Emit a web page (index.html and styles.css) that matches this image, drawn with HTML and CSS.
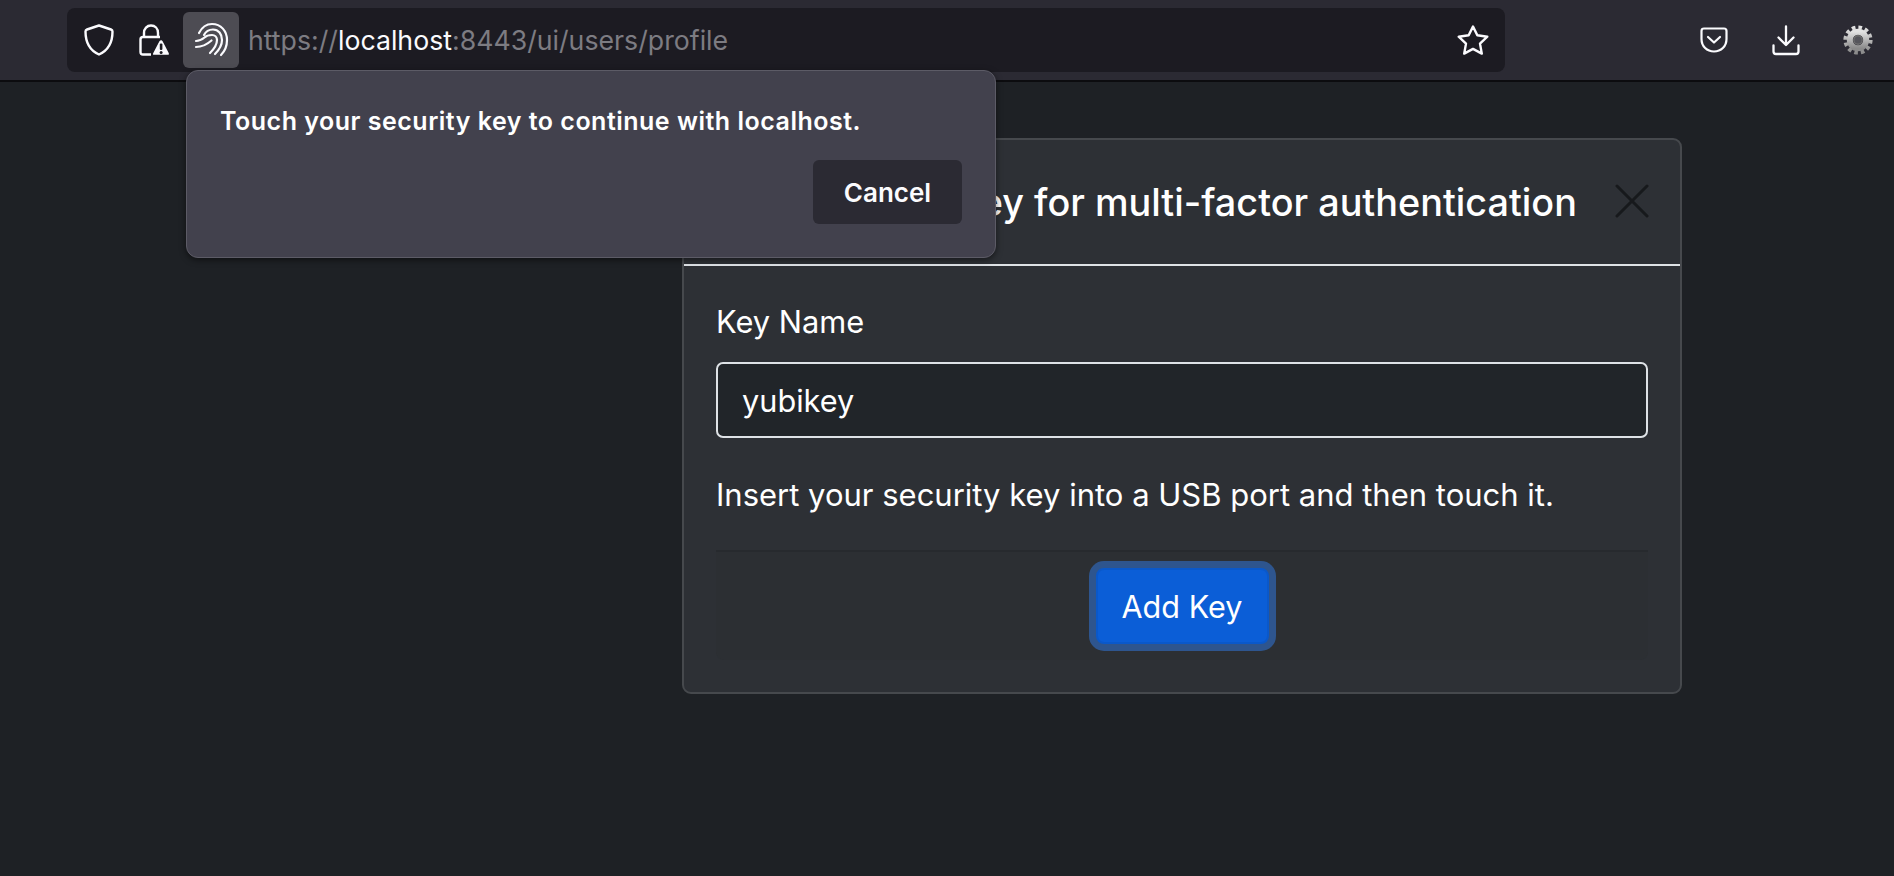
FILE: index.html
```html
<!DOCTYPE html>
<html lang="en">
<head>
    <meta charset="UTF-8">
    <title>Add security key</title>
    <link rel="stylesheet" href="styles.css">
</head>
<body>

<div class="toolbar">
    <div class="urlbar">
        <svg class="icon-shield" width="30" height="32" viewBox="0 0 30 32" fill="none" stroke="#fbfbfe" stroke-width="2.4" stroke-linejoin="round">
            <path d="M15 1.5 L27 5.5 Q28.5 6 28.5 7.5 C28.5 19 24 26.5 15 30.5 C6 26.5 1.5 19 1.5 7.5 Q1.5 6 3 5.5 Z"/>
        </svg>
        <svg class="icon-lock" width="31" height="32" viewBox="0 0 31 32" fill="none">
            <path d="M5 13 V9 C5 4.5 8 1.5 12 1.5 C16 1.5 19 4.5 19 9 V13" stroke="#fbfbfe" stroke-width="2.4"/>
            <path d="M12 30.5 H4 Q1.5 30.5 1.5 28 V15.5 Q1.5 13 4 13 H21" stroke="#fbfbfe" stroke-width="2.4"/>
            <path d="M22 15.5 Q23 15 24 16.5 L30.5 29 Q31 31.5 29 31.5 H15 Q12.5 31.5 13.5 29 L20 16.5 Q20.8 15.5 22 15.5 Z" fill="#fbfbfe" stroke="#1c1b22" stroke-width="1.5"/>
            <rect x="20.8" y="19.5" width="2.6" height="6.5" rx="1" fill="#1c1b22"/>
            <circle cx="22.1" cy="28.4" r="1.5" fill="#1c1b22"/>
        </svg>
        <div class="auth-btn">
            <svg width="44" height="44" viewBox="0 0 44 44" fill="none" stroke="#fbfbfe" stroke-width="2.2" stroke-linecap="round">
                <path d="M10 15 C13 9 18 6 23 6 C32 6 38 13 38 22 C38 28 36 33 32 37"/>
                <path d="M15 17 C17 13 20 11.5 24 11.5 C29.5 11.5 33 16 33 22 C33 27 30 32 26 36"/>
                <path d="M7 23 C10 23 13 21.5 15.5 19.5 C18 17 20.5 17 23 17 C26 17 28 19.5 28 22 C28 26 25 31 21 35"/>
                <path d="M7 29 C12 29 18 26.5 22.5 22.5"/>
            </svg>
        </div>
        <div class="url"><span class="url-dim">https://</span>localhost<span class="url-dim">:8443/ui/users/profile</span></div>
        <svg class="icon-star" width="32" height="31" viewBox="0 0 32 31" fill="none" stroke="#fbfbfe" stroke-width="2.4" stroke-linejoin="round">
            <path d="M16 1.5 L20.3 10.3 L30.3 11.7 L23 18.6 L24.8 28.6 L16 23.9 L7.2 28.6 L9 18.6 L1.7 11.7 L11.7 10.3 Z"/>
        </svg>
    </div>
    <div class="tools">
        <svg width="28" height="26" viewBox="0 0 28 26" fill="none" stroke="#fbfbfe" stroke-width="2.2" stroke-linecap="round" stroke-linejoin="round">
            <path d="M4 1.5 H24 Q26.5 1.5 26.5 4 V12 C26.5 19.5 21 24.5 14 24.5 C7 24.5 1.5 19.5 1.5 12 V4 Q1.5 1.5 4 1.5 Z"/>
            <path d="M8 10 L14 15.5 L20 10"/>
        </svg>
        <svg width="28" height="31" viewBox="0 0 28 31" fill="none" stroke="#fbfbfe" stroke-width="2.3" stroke-linecap="round" stroke-linejoin="round">
            <path d="M14 1.5 V20 M6.5 12.5 L14 20 L21.5 12.5"/>
            <path d="M1.5 20.5 V26.5 Q1.5 29 4 29 H24 Q26.5 29 26.5 26.5 V20.5"/>
        </svg>
        <svg class="icon-gear" width="30" height="30" viewBox="0 0 30 30" fill="none">
            <defs>
                <linearGradient id="gearFill" x1="0" y1="0" x2="0" y2="1">
                    <stop offset="0" stop-color="#e2e2e2"/>
                    <stop offset="1" stop-color="#8a8a8a"/>
                </linearGradient>
            </defs>
            <circle cx="15" cy="15" r="12.6" stroke="url(#gearFill)" stroke-width="4" stroke-dasharray="3.6 3"/>
            <circle cx="15" cy="15" r="8.2" stroke="url(#gearFill)" stroke-width="6"/>
            <circle cx="15" cy="15" r="4.2" fill="#55555b" stroke="#6f6f6f" stroke-width="1.4"/>
        </svg>
    </div>
</div>

<div class="popup">
    <p class="popup-text">Touch your security key to continue with localhost.</p>
    <div class="popup-actions">
        <button class="popup-cancel">Cancel</button>
    </div>
</div>

<div class="page">
    <div class="modal">
        <div class="modal-header">
            <h2 class="modal-title">Add security key for multi-factor authentication</h2>
            <svg class="modal-close" width="34" height="34" viewBox="0 0 34 34" fill="none" stroke="#17191c" stroke-width="3" stroke-linecap="round">
                <path d="M2 2 L32 32 M32 2 L2 32"/>
            </svg>
        </div>
        <div class="modal-body">
            <label class="field-label" for="keyName">Key Name</label>
            <input class="field-input" id="keyName" type="text" value="yubikey">
            <p class="help-text">Insert your security key into a USB port and then touch it.</p>
            <div class="modal-footer">
                <button class="btn-primary">Add Key</button>
            </div>
        </div>
    </div>
</div>

</body>
</html>
```

FILE: styles.css
```css
* {
    box-sizing: border-box;
}
html, body {
    height: 100%;
}
body {
    margin: 0;
    background-color: #1e2125;
    color: #fff;
    font-family: Inter, "Liberation Sans", sans-serif;
    overflow: hidden;
}
.toolbar {
    height: 82px;
    background-color: #2b2a33;
    border-bottom: 2px solid #0c0c0f;
    display: flex;
    padding: 8px 21px 0 67px;
    justify-content: space-between;
}
.urlbar {
    width: 1438px;
    height: 64px;
    background-color: #1c1b22;
    border-radius: 8px;
    display: flex;
    align-items: center;
    padding-left: 17px;
}
.icon-lock {
    margin-left: 25px;
}
.auth-btn {
    width: 56px;
    height: 56px;
    margin-left: 13px;
    background-color: #4d4c53;
    border-radius: 6px;
    display: flex;
    align-items: center;
    justify-content: center;
}
.url {
    flex: 1;
    margin-left: 9px;
    font-size: 26.7px;
    color: #fbfbfe;
    white-space: nowrap;
}
.url-dim {
    color: #7d7c82;
}
.icon-star {
    margin-right: 16px;
}
.tools {
    display: flex;
    align-items: center;
    gap: 44px;
    height: 64px;
}
.icon-gear {
    margin-left: -1px;
}
.popup {
    position: absolute;
    left: 186px;
    top: 70px;
    width: 810px;
    height: 188px;
    background-color: #42414d;
    border: 1px solid #5c5b66;
    border-radius: 12px;
    padding: 0 33px;
    box-shadow: 0 2px 6px rgba(0, 0, 0, 0.5);
}
.popup-text {
    margin: 35px 0 0;
    font-size: 25px;
    line-height: 30px;
    font-weight: 600;
    letter-spacing: 0.5px;
}
.popup-actions {
    display: flex;
    justify-content: flex-end;
    margin-top: 24px;
}
.popup-cancel {
    width: 149px;
    height: 64px;
    background-color: #2b2a33;
    border: none;
    border-radius: 6px;
    color: #fbfbfe;
    font-family: inherit;
    font-size: 26px;
    font-weight: 600;
}
.page {
    padding: 56px 0 0 682px;
}
.modal {
    width: 1000px;
    height: 556px;
    background-color: #2d3035;
    border: 2px solid #46494d;
    border-radius: 9px;
}
.modal-header {
    height: 126px;
    border-bottom: 2px solid #dee2e6;
    display: flex;
    align-items: center;
    justify-content: space-between;
    padding: 0 31px 0 36px;
}
.modal-title {
    margin: 0;
    font-size: 37.8px;
    font-weight: 500;
    white-space: nowrap;
}
.modal-close {
    margin-top: -2px;
}
.modal-body {
    padding: 34px 32px 0 32px;
}
.field-label {
    display: block;
    font-size: 30.8px;
    line-height: 44px;
}
.field-input {
    display: block;
    width: 100%;
    height: 76px;
    margin-top: 18px;
    padding: 0 24px;
    background-color: #212529;
    border: 2px solid #dee2e6;
    border-radius: 7px;
    color: #fff;
    font-family: inherit;
    font-size: 30.7px;
}
.help-text {
    margin: 35px 0 0;
    font-size: 31px;
    line-height: 44px;
}
.modal-footer {
    height: 110px;
    margin-top: 33px;
    border-top: 2px solid #272a2e;
    background-color: #2c2f33;
    border-radius: 0 0 8px 8px;
    display: flex;
    justify-content: center;
    padding-top: 16px;
}
.btn-primary {
    width: 173px;
    height: 76px;
    background-color: #0b5ed7;
    border: 2px solid #0a58ca;
    border-radius: 8px;
    box-shadow: 0 0 0 7px rgba(49, 132, 253, 0.45);
    color: #fff;
    font-family: inherit;
    font-size: 30.6px;
}
```
